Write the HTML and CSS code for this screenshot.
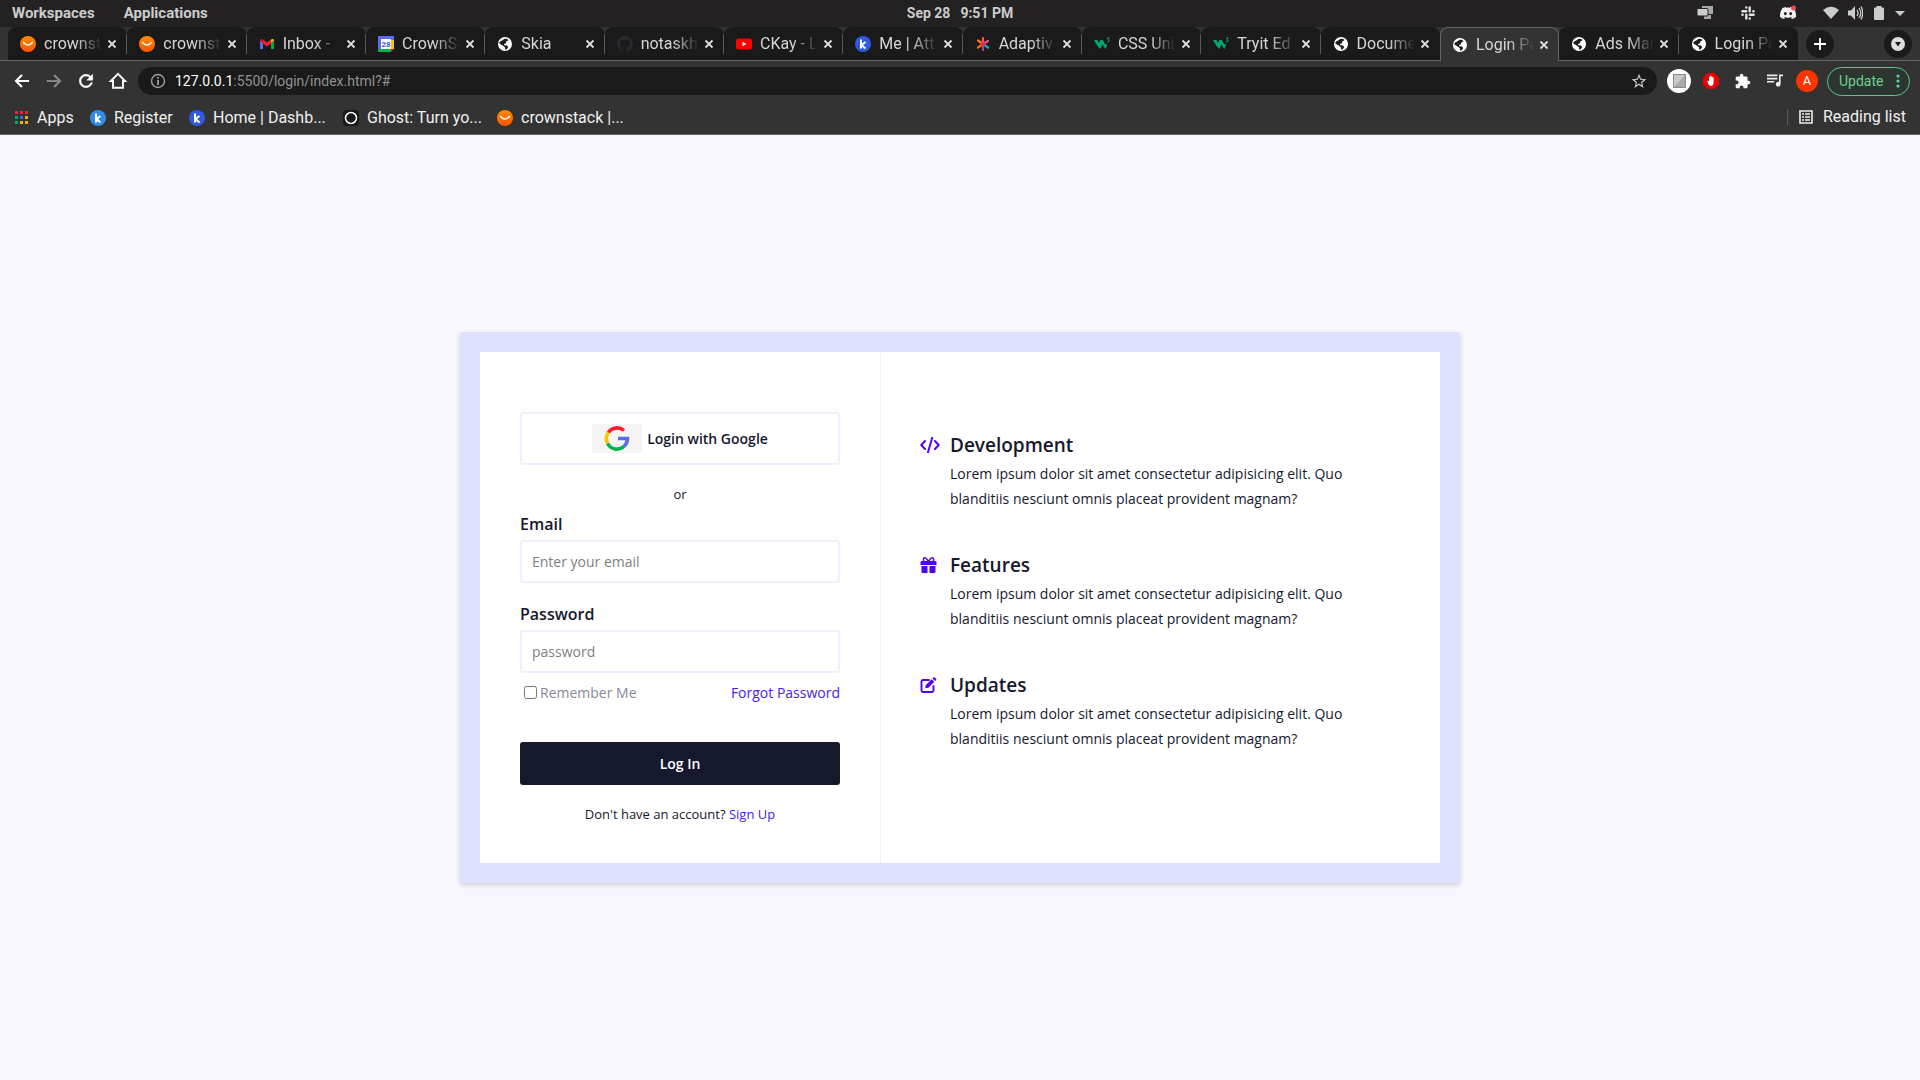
FILE: index.html
```html
<!DOCTYPE html>
<html lang="en">
<head>
<meta charset="utf-8">
<title>Login Page</title>
<link rel="stylesheet" href="styles.css">
</head>
<body>
<svg class="sprite" aria-hidden="true">
  <defs>
    <linearGradient id="orange" x1="0" y1="0" x2="0" y2="1"><stop offset="0" stop-color="#ff8a00"/><stop offset="1" stop-color="#ff5500"/></linearGradient>
  </defs>
  <symbol id="crown" viewBox="0 0 16 16"><circle cx="8" cy="8" r="8" fill="url(#orange)"/><path d="M3.500 6.500Q8 11.500 12.500 6.500" fill="none" stroke="#fff" stroke-width="1.500" stroke-linecap="round"/></symbol>
  <symbol id="gmail" viewBox="0 0 16 16"><path d="M1 4.500V13h3V7z" fill="#5a6cf5"/><path d="M15 4.500V13h-3V7z" fill="#00ac47"/><path d="M1 4.500L4 7V3.500C2.500 2.500 1 3 1 4.500z" fill="#c5121b"/><path d="M4 3.500l4 3 4-3V7.500l-4 3-4-3z" fill="#ff1a2d"/><path d="M15 4.500L12 7V3.500C13.500 2.500 15 3 15 4.500z" fill="#ffba00"/></symbol>
  <symbol id="calendar" viewBox="0 0 16 16"><path fill="#5a6cf5" d="M0 0h16v4H4v12H0z"/><path fill="#ffc400" d="M12 4h4v9h-4z"/><path fill="#00b44b" d="M0 13h13v3H0z"/><path fill="#e8202f" d="M13 13h3l-3 3z"/><path fill="#fff" d="M3 3h10v10H3z"/><text x="8" y="11" font-size="8" font-weight="700" text-anchor="middle" fill="#3a5be0">28</text></symbol>
  <symbol id="globe" viewBox="0 0 16 16"><circle cx="8" cy="8" r="7" fill="#fff"/><path d="M7 3.200c1.500-.8 3.500-.2 4.500 1l-2.300 1.300-.2 1.800-2 .7.300 1.300 2.700.2 1.200 1.400-1.500 2.300-1.700.6.200-2-1.400-1.500-3.600-2.200-1-.9c.3-1.500 1.300-2.300 2.600-2.500z" fill="#1c1c1c"/></symbol>
  <symbol id="github" viewBox="0 0 16 16"><path fill="#252a33" d="M8 0C3.580 0 0 3.580 0 8c0 3.540 2.290 6.530 5.470 7.590.4.070.55-.17.55-.38 0-.19-.01-.82-.01-1.490-2.010.37-2.530-.49-2.690-.94-.09-.23-.48-.94-.82-1.130-.28-.15-.68-.52-.01-.53.63-.01 1.080.58 1.230.82.72 1.210 1.870.87 2.330.66.070-.52.28-.87.51-1.070-1.780-.2-3.640-.89-3.640-3.950 0-.87.31-1.590.82-2.150-.08-.2-.36-1.020.08-2.120 0 0 .67-.21 2.200.82.64-.18 1.320-.27 2-.27.68 0 1.360.09 2 .27 1.530-1.040 2.200-.82 2.200-.82.44 1.100.16 1.920.08 2.120.51.56.82 1.270.82 2.150 0 3.070-1.870 3.750-3.650 3.950.29.25.54.73.54 1.480 0 1.070-.01 1.930-.01 2.200 0 .21.15.46.55.38A8.012 8.012 0 0 0 16 8c0-4.420-3.580-8-8-8z"/></symbol>
  <symbol id="youtube" viewBox="0 0 16 16"><rect y="2.500" width="16" height="11" rx="2.500" fill="#f00"/><path d="M6.500 5.700v4.600l4-2.300z" fill="#fff"/></symbol>
  <symbol id="kblue" viewBox="0 0 16 16"><circle cx="8" cy="8" r="8" fill="#3059e0"/><path d="M6 3.500v9M10.500 6L6.500 9l4 3.500" fill="none" stroke="#fff" stroke-width="2"/></symbol>
  <symbol id="klight" viewBox="0 0 16 16"><circle cx="8" cy="8" r="8" fill="#318ce8"/><path d="M6 3.500v9M10.500 6L6.500 9l4 3.500" fill="none" stroke="#fff" stroke-width="2"/></symbol>
  <symbol id="asterisk" viewBox="0 0 16 16"><g fill="none" stroke-width="2.200" stroke-linecap="round"><path d="M8 8V2" stroke="#ff5a3c"/><path d="M8 8l5-3" stroke="#f0508c"/><path d="M8 8l5 3.500" stroke="#18a7b5"/><path d="M8 8v6" stroke="#b04090"/><path d="M8 8l-5 3.500" stroke="#ff6a00"/><path d="M8 8L3 4.500" stroke="#ff7a1a"/></g><circle cx="8" cy="8" r="2" fill="#e8245c"/></symbol>
  <symbol id="w3" viewBox="0 0 16 16"><path d="M0 4h3.500l1.300 3L6.500 4h2.300l2.400 4.500 1.300-.5.500 1-1.500 4L8.300 8.500 6.500 13 3.500 10z" fill="#04aa6d"/><path d="M13 2h2.300L14 3.800c2 0 1.500 2.700-1 2" fill="none" stroke="#04aa6d"/></symbol>
  <symbol id="ghost" viewBox="0 0 16 16"><rect width="16" height="16" rx="4" fill="#15171a"/><circle cx="8" cy="8" r="5.500" fill="none" stroke="#fff" stroke-width="1.500"/></symbol>
  <symbol id="close" viewBox="0 0 16 16"><path d="M4.500 4.500l7 7M11.500 4.500l-7 7" stroke="#dedede" stroke-width="1.800"/></symbol>
</svg>

<header class="browser">
  <div class="system">
    <nav class="system-left"><a href="#">Workspaces</a><a href="#">Applications</a></nav>
    <div class="clock"><span>Sep 28</span><span>9:51 PM</span></div>
    <div class="tray">
      <svg class="i16" viewBox="0 0 16 16"><path d="M5 1h11v8H5zM7 10h7v4H7z" fill="#a8a8a8"/><rect y="3.500" width="11" height="7.500" rx="1" fill="#ccc" stroke="#242122"/></svg>
      <svg class="i16 tray-slack" viewBox="0 0 16 16"><path d="M2.400 6.300h3.800M9.700 2.400v3.800M9.800 9.700h3.800M6.300 9.800v3.800M6.300 2.400v.2M13.600 6.300h-.2M9.700 13.600v-.2M2.400 9.700h.2" fill="none" stroke="#e4e4e4" stroke-width="2.400" stroke-linecap="round"/></svg>
      <svg class="i16 tray-discord" viewBox="0 0 16 16"><path fill="#f2f2f2" d="M13.545 2.907a13.227 13.227 0 0 0-3.257-1.011c-.2.200-.35.500-.458.858a12.190 12.190 0 0 0-3.658 0c-.12-.3-.25-.6-.464-.858-1.125.194-2.220.534-3.257 1.011C.356 6.024-.213 9.047.066 12.032a13.276 13.276 0 0 0 4.016 2.057c.36-.42.650-.9.874-1.348a8.875 8.875 0 0 1-1.276-.665l.314-.280c2.619 1.196 5.454 1.196 8.092 0l.3.270a8.254 8.254 0 0 1-1.282.675c.24.465.515.909.873 1.348a13.235 13.235 0 0 0 4.022-2.057c.334-3.451-.559-6.449-2.454-9.125zM5.347 10.214c-.789 0-1.438-.724-1.438-1.612 0-.889.637-1.613 1.438-1.613s1.450.73 1.438 1.613c0 .888-.637 1.612-1.438 1.612zm5.316 0c-.788 0-1.438-.724-1.438-1.612 0-.889.637-1.613 1.438-1.613s1.451.73 1.438 1.613c0 .888-.631 1.612-1.438 1.612z"/><circle cx="13.500" cy="3" r="2.500" fill="#f04747"/></svg>
      <svg class="i16 tray-wifi" viewBox="0 0 16 16"><path d="M0 5Q8-1.500 16 5L8 14z" fill="#ccc"/></svg>
      <svg class="i16" viewBox="0 0 16 16"><path d="M1 5.500h3L8 1v14l-4-4.500H1z" fill="#ccc"/><path d="M10 5q2 3 0 6M12 3q3.500 5 0 10M14 1.500q3.500 6.500 0 13" fill="none" stroke="#ccc" stroke-width="1.300"/></svg>
      <svg class="i16" viewBox="0 0 16 16"><path d="M5.500 1h5v1.500H12q1 0 1 1V14q0 1-1 1H4q-1 0-1-1V3.500q0-1 1-1h1.500z" fill="#ccc"/></svg>
      <svg class="i16 tray-caret" viewBox="0 0 16 16"><path d="M3 6h10l-5 5z" fill="#ccc"/></svg>
    </div>
  </div>

  <div class="strip">
    <div class="tabs">
      <div class="tab"><svg class="i16"><use href="#crown"/></svg><span>crownst</span><button aria-label="Close"><svg class="i16"><use href="#close"/></svg></button></div>
      <div class="tab"><svg class="i16"><use href="#crown"/></svg><span>crownst</span><button aria-label="Close"><svg class="i16"><use href="#close"/></svg></button></div>
      <div class="tab"><svg class="i16"><use href="#gmail"/></svg><span>Inbox -</span><button aria-label="Close"><svg class="i16"><use href="#close"/></svg></button></div>
      <div class="tab"><svg class="i16"><use href="#calendar"/></svg><span>CrownSt</span><button aria-label="Close"><svg class="i16"><use href="#close"/></svg></button></div>
      <div class="tab"><svg class="i16"><use href="#globe"/></svg><span>Skia</span><button aria-label="Close"><svg class="i16"><use href="#close"/></svg></button></div>
      <div class="tab"><svg class="i16"><use href="#github"/></svg><span>notaskh</span><button aria-label="Close"><svg class="i16"><use href="#close"/></svg></button></div>
      <div class="tab"><svg class="i16"><use href="#youtube"/></svg><span>CKay - L</span><button aria-label="Close"><svg class="i16"><use href="#close"/></svg></button></div>
      <div class="tab"><svg class="i16"><use href="#kblue"/></svg><span>Me | Att</span><button aria-label="Close"><svg class="i16"><use href="#close"/></svg></button></div>
      <div class="tab"><svg class="i16"><use href="#asterisk"/></svg><span>Adaptiv</span><button aria-label="Close"><svg class="i16"><use href="#close"/></svg></button></div>
      <div class="tab"><svg class="i16"><use href="#w3"/></svg><span>CSS Uni</span><button aria-label="Close"><svg class="i16"><use href="#close"/></svg></button></div>
      <div class="tab"><svg class="i16"><use href="#w3"/></svg><span>Tryit Ed</span><button aria-label="Close"><svg class="i16"><use href="#close"/></svg></button></div>
      <div class="tab before-active"><svg class="i16"><use href="#globe"/></svg><span>Docume</span><button aria-label="Close"><svg class="i16"><use href="#close"/></svg></button></div>
      <div class="tab active"><svg class="i16"><use href="#globe"/></svg><span>Login Pa</span><button aria-label="Close"><svg class="i16"><use href="#close"/></svg></button></div>
      <div class="tab"><svg class="i16"><use href="#globe"/></svg><span>Ads Mar</span><button aria-label="Close"><svg class="i16"><use href="#close"/></svg></button></div>
      <div class="tab"><svg class="i16"><use href="#globe"/></svg><span>Login Pa</span><button aria-label="Close"><svg class="i16"><use href="#close"/></svg></button></div>
    </div>
    <button class="round" aria-label="New tab"><svg class="i16" viewBox="0 0 16 16"><path d="M8 2v12M2 8h12" stroke="#fff" stroke-width="1.800"/></svg></button>
    <button class="round search-tabs" aria-label="Search tabs"><svg class="i16" viewBox="0 0 16 16"><circle cx="8" cy="8" r="7" fill="#dedede"/><path d="M5 6h6l-3 4.500z" fill="#1a1a1a"/></svg></button>
  </div>

  <div class="toolbar">
    <div class="nav">
      <button aria-label="Back"><svg class="i20" viewBox="0 0 24 24"><path fill="#fff" d="M20.500 10.800H7.830l5.090-5.090L11 4l-8 8 8 8 1.800-1.700-5-5.100h12.700z"/></svg></button>
      <button aria-label="Forward"><svg class="i20" viewBox="0 0 24 24"><path fill="#868686" d="M3.500 10.800h12.670l-5.090-5.090L13 4l8 8-8 8-1.800-1.700 5-5.100H3.500z"/></svg></button>
      <button aria-label="Reload"><svg class="i20" viewBox="0 0 24 24"><path fill="#fff" stroke="#fff" stroke-width=".6" d="M17.650 6.350C16.200 4.900 14.210 4 12 4c-4.420 0-7.990 3.580-7.990 8s3.570 8 7.990 8c3.730 0 6.840-2.550 7.730-6h-2.080c-.82 2.330-3.040 4-5.650 4-3.310 0-6-2.690-6-6s2.690-6 6-6c1.660 0 3.140.69 4.220 1.780L13 11h7V4l-2.350 2.350z"/></svg></button>
      <button aria-label="Home"><svg class="i20" viewBox="0 0 24 24"><path d="M3.500 12L12 3.500l8.500 8.500H18v8H6v-8z" fill="none" stroke="#fff" stroke-width="2.300"/></svg></button>
    </div>
    <div class="omnibox">
      <svg class="i16" viewBox="0 0 16 16"><circle cx="8" cy="8" r="6.500" fill="none" stroke="#9a9fa4" stroke-width="1.400"/><path d="M8 4v1.800M8 7v5" stroke="#9a9fa4" stroke-width="1.800"/></svg>
      <div class="url"><b>127.0.0.1</b>:5500/login/index.html?#</div>
      <svg class="i16" viewBox="0 0 24 24"><path fill="#ccc" d="M23 9.240l-8-.62L12 1 9 8.630 1 9.240l6.200 5.230L5.300 22.500 12 18l6.700 4.500-1.900-8.030zM12 15.800l-4 2.500 1-4.900-3.500-2.900 4.700-.4L12 5.700l1.800 4.400 4.700.4-3.500 2.900 1 4.900z"/></svg>
    </div>
    <div class="extensions">
      <svg class="i24" viewBox="0 0 24 24"><circle cx="12" cy="12" r="12" fill="#fff"/><path d="M6 5h13v14H6z" fill="#a8a8a8"/><path d="M7 6h11L7 18z" fill="#c8c8c8"/><path d="M6.500 5.500h12v13h-12z" fill="none" stroke="#888"/></svg>
      <svg class="i16 ext" viewBox="0 0 16 16"><path d="M4.700 0h6.600L16 4.700v6.600L11.300 16H4.700L0 11.300V4.700z" fill="#f00000"/><path d="M5 7.500l1 1V4.200q.7-.8 1 0V3q.8-.8 1.200 0v.6q.8-.6 1.200 0v1q.8-.5 1.200 0V9q0 4-2.600 4Q6.500 13 5 10.500 3.800 7.800 5 7.500z" fill="#fff"/></svg>
      <svg class="i16 ext" viewBox="1 0 23 23"><path fill="#fff" d="M20.500 11H19V7c0-1.100-.9-2-2-2h-4V3.500C13 2.120 11.880 1 10.500 1S8 2.120 8 3.500V5H4c-1.100 0-1.990.9-1.990 2v3.800H3.500c1.490 0 2.700 1.210 2.700 2.700s-1.210 2.700-2.700 2.700H2V20c0 1.100.9 2 2 2h3.800v-1.500c0-1.490 1.210-2.700 2.700-2.700 1.490 0 2.700 1.210 2.700 2.700V22H17c1.100 0 2-.9 2-2v-4h1.500c1.380 0 2.500-1.120 2.500-2.500S21.880 11 20.500 11z"/></svg>
      <svg class="i16 ext" viewBox="2 3 20 20"><path fill="#eee" d="M15 5H2v2h13zm0 4H2v2h13zM2 15h9v-2H2zM17 5v9.180c-.31-.11-.65-.18-1-.18-1.660 0-3 1.340-3 3s1.340 3 3 3 3-1.340 3-3V7h3V5z"/></svg>
      <button class="avatar">A</button>
      <button class="update">Update<svg viewBox="0 0 4 14"><g fill="#6ad08f"><circle cx="2" cy="2" r="1.600"/><circle cx="2" cy="7" r="1.600"/><circle cx="2" cy="12" r="1.600"/></g></svg></button>
    </div>
  </div>

  <nav class="bookmarks">
    <div class="marks">
      <a href="#"><svg class="i14" viewBox="0 0 14 14"><path fill="#ff1d35" d="M0 0h3v3H0zM5 0h3v3H5zM10 0h3v3h-3z"/><path fill="#00ac57" d="M0 5h3v3H0z"/><path fill="#3b6cf0" d="M5 5h3v3H5z"/><path fill="#f9ab00" d="M10 5h3v3h-3zM5 10h3v3H5zM10 10h3v3h-3z"/><path fill="#00ac57" d="M0 10h3v3H0z"/></svg>Apps</a>
      <a href="#"><svg class="i16"><use href="#klight"/></svg>Register</a>
      <a href="#"><svg class="i16"><use href="#kblue"/></svg>Home | Dashb...</a>
      <a href="#"><svg class="i16"><use href="#ghost"/></svg>Ghost: Turn yo...</a>
      <a href="#"><svg class="i16"><use href="#crown"/></svg>crownstack |...</a>
    </div>
    <a class="reading" href="#"><svg class="i14" viewBox="0 0 14 14"><path d="M1 1h12v12H1z" fill="none" stroke="#eee" stroke-width="1.600"/><path d="M3 4h2M6 4h5M3 7h2M6 7h5M3 10h2M6 10h5" stroke="#eee" stroke-width="1.600"/></svg>Reading list</a>
  </nav>
</header>

<main>
  <div class="card">
    <form class="login">
      <button type="button" class="google">
        <svg viewBox="0 0 50 29"><path fill="#f5f5f5" d="M0 0h50v29H0z"/><g fill="none" stroke-width="3.600"><path d="M16.300 8.600A10.500 10.500 0 0 1 32 6.500" stroke="#ff1a2d"/><path d="M15.600 19.500A10.500 10.500 0 0 1 16.300 8.600" stroke="#ffc400"/><path d="M32 22.300A10.500 10.500 0 0 1 15.600 19.500" stroke="#00b44b"/><path d="M26 14.500h9.500A10.500 10.500 0 0 1 32 22.300" stroke="#5a6cf5"/></g></svg>
        Login with Google
      </button>
      <p class="or">or</p>
      <label for="email">Email</label>
      <input class="field" id="email" type="email" placeholder="Enter your email">
      <label for="password">Password</label>
      <input class="field" id="password" type="password" placeholder="password">
      <div class="options">
        <label class="remember"><input type="checkbox">Remember Me</label>
        <a href="#">Forgot Password</a>
      </div>
      <button type="button" class="submit">Log In</button>
      <p class="signup">Don't have an account? <a href="#">Sign Up</a></p>
    </form>
    <section class="features">
      <article>
        <svg class="feature-code" viewBox="0 0 20 16"><path d="M5 4L1.300 8 5 12M15 4l3.700 4L15 12M12.200.8L8 15.200" fill="none" stroke="#5206f0" stroke-width="2" stroke-linecap="round" stroke-linejoin="round"/></svg>
        <div><h2>Development</h2><p>Lorem ipsum dolor sit amet consectetur adipisicing elit. Quo blanditiis nesciunt omnis placeat provident magnam?</p></div>
      </article>
      <article>
        <svg class="feature-icon" viewBox="0 0 16 16"><path d="M1 4h14q1 0 1 1v3H0V5q0-1 1-1zM1 9h6v7H2q-1 0-1-1zM9 9h6v6q0 1-1 1H9z" fill="#5206f0"/><path d="M8 4.500Q5.500.8 4.300.8C2.300.8 2.500 4 4 4.500M8 4.500Q10.500.8 11.700.8C13.700.8 13.500 4 12 4.500" fill="none" stroke="#5206f0" stroke-width="1.500"/></svg>
        <div><h2>Features</h2><p>Lorem ipsum dolor sit amet consectetur adipisicing elit. Quo blanditiis nesciunt omnis placeat provident magnam?</p></div>
      </article>
      <article>
        <svg class="feature-icon" viewBox="0 0 16 16"><path d="M8.500 3H2.500Q1 3 1 4.500v9Q1 15 2.500 15h9q1.500 0 1.500-1.500V9" fill="none" stroke="#5206f0" stroke-width="1.900" stroke-linecap="round"/><path d="M11.200 2.200l2.600 2.600L8 10.700l-3.300.6.600-3.300zM12 1.400l.8-.8q.8-.8 1.600 0l1 1q.8.800 0 1.600l-.8.800z" fill="#5206f0"/></svg>
        <div><h2>Updates</h2><p>Lorem ipsum dolor sit amet consectetur adipisicing elit. Quo blanditiis nesciunt omnis placeat provident magnam?</p></div>
      </article>
    </section>
  </div>
</main>
</body>
</html>
```
FILE: styles.css
```css
* { box-sizing: border-box; margin: 0; padding: 0; }

body {
  min-height: 100vh;
  display: flex;
  flex-direction: column;
  background: #f7f7fd;
  color: #16182d;
  font-family: "Open Sans", sans-serif;
  font-size: 14px;
  line-height: 25px;
}

button { border: 0; background: none; font: inherit; color: inherit; }
a { color: inherit; text-decoration: none; }
svg { display: block; flex: none; }

.sprite { position: absolute; width: 0; height: 0; }
.i14 { width: 14px; height: 14px; }
.i16 { width: 16px; height: 16px; }
.i20 { width: 20px; height: 20px; }
.i24 { width: 24px; height: 24px; }

/* Desktop bar */
.browser { font-family: Roboto, sans-serif; font-size: 16px; line-height: 20px; }
.system {
  display: grid;
  grid-template-columns: 1fr auto 1fr;
  align-items: center;
  height: 27px;
  padding: 0 12px 2px;
  background: #242122;
  color: #ccc;
  font-size: 15px;
  font-weight: 700;
}
.system-left { display: flex; gap: 29px; }
.clock { display: flex; gap: 10px; font-size: 14px; }
.tray { display: flex; justify-content: flex-end; gap: 8px; }
.tray-slack { margin-left: 19px; }
.tray-discord { margin: 0 19px 0 16px; }
.tray-caret { margin-left: -3px; }

/* Tab strip */
.strip {
  display: flex;
  align-items: center;
  height: 34px;
  padding: 0 8px;
  background: #333;
  border-bottom: 1px solid #666;
}
.tabs { display: flex; flex: 1; min-width: 0; }
.tab {
  display: flex;
  flex: 1;
  align-items: center;
  min-width: 0;
  height: 33px;
  padding: 0 7px 0 12px;
  border-radius: 8px 8px 0 0;
  background: linear-gradient(#5a5a5a, #5a5a5a) right center / 1px 20px no-repeat #1a1a1a;
  color: #d6d6d6;
}
.tab:last-child, .before-active { background: #1a1a1a; }
.tab.active {
  height: 34px;
  margin-bottom: -1px;
  padding: 0 6px 0 11px;
  border: 1px solid #666;
  border-bottom: 0;
  background: #333;
}
.tab span {
  flex: 1;
  min-width: 0;
  margin: 0 2px 0 8px;
  overflow: hidden;
  white-space: nowrap;
  -webkit-mask-image: linear-gradient(to right, #000 55%, transparent);
  mask-image: linear-gradient(to right, #000 55%, transparent);
}
.round {
  display: grid;
  flex: none;
  place-items: center;
  width: 28px;
  height: 28px;
  margin-left: 8px;
  border-radius: 50%;
  background: #1a1a1a;
}
.search-tabs { margin-left: 50px; }

/* Toolbar */
.toolbar {
  display: flex;
  align-items: center;
  gap: 10px;
  height: 40px;
  padding: 0 10px 0 12px;
  background: #333;
}
.nav { display: flex; gap: 12px; }
.omnibox {
  display: flex;
  flex: 1;
  align-items: center;
  gap: 9px;
  height: 28px;
  padding: 0 10px 0 12px;
  border-radius: 14px;
  background: #1a1a1a;
}
.url { flex: 1; color: #929292; font-size: 14px; }
.url b { color: #fff; font-weight: 400; }
.extensions { display: flex; align-items: center; }
.ext { margin: 0 4px 0 12px; }
.avatar {
  width: 22px;
  height: 22px;
  margin: 0 9px;
  border-radius: 50%;
  background: #ff3300;
  color: #fff;
  font-size: 13px;
}
.update {
  display: flex;
  align-items: center;
  justify-content: space-between;
  width: 83px;
  height: 29px;
  padding: 0 9px 0 11px;
  border: 1px solid #5bc987;
  border-radius: 15px;
  background: #2d3531;
  color: #6ad08f;
  font-size: 14px;
}
.update svg { width: 4px; height: 14px; }

/* Bookmarks */
.bookmarks {
  display: flex;
  justify-content: space-between;
  height: 34px;
  padding: 7px 14px 8px 15px;
  border-bottom: 1px solid #666;
  background: #333;
  color: #f0f0f0;
}
.bookmarks a { display: flex; align-items: center; gap: 8px; white-space: nowrap; }
.marks { display: grid; grid-template-columns: 75px 99px 154px 154px auto; }
.bookmarks .reading { gap: 10px; padding-left: 12px; background: linear-gradient(#5a5a5a, #5a5a5a) left center / 1px 16px no-repeat; }

/* Login card */
main { display: flex; flex: 1; align-items: center; justify-content: center; }
.card {
  display: flex;
  width: 100%;
  max-width: 1000px;
  border: 20px solid #dde1ff;
  border-radius: 3px;
  background: #fff;
  box-shadow: 0 2px 5px rgba(0, 0, 0, .16);
}
.login {
  display: flex;
  flex-direction: column;
  width: 401px;
  padding: 60px 40px 37px;
  border-right: 1px solid #eef0ff;
}
.google {
  display: flex;
  align-items: center;
  justify-content: center;
  gap: 5px;
  height: 53px;
  margin-bottom: 17px;
  border: 2px solid #eef0ff;
  border-radius: 3px;
  font-weight: 600;
}
.google svg { width: 50px; height: 29px; }
.or, .signup { font-size: 13px; line-height: 24px; text-align: center; }
.or { margin-bottom: 4px; }
.login > label { margin-bottom: 2px; font-size: 16px; font-weight: 600; line-height: 28px; }
.field {
  height: 43px;
  margin-bottom: 17px;
  padding: 0 10px;
  border: 2px solid #eef0ff;
  border-radius: 3px;
  font: inherit;
}
.field::placeholder { color: #808080; }
#password { margin-bottom: 7px; }
.options { display: flex; justify-content: space-between; margin-bottom: 37px; }
.remember { display: flex; align-items: center; gap: 3px; padding-left: 4px; color: #87889a; }
.remember input { width: 13px; height: 13px; }
.login a { color: #4a1bef; }
.submit {
  height: 43px;
  margin-bottom: 17px;
  border-radius: 3px;
  background: #16182d;
  color: #fff;
  font-weight: 600;
}

/* Feature list */
.features {
  display: flex;
  flex: 1;
  flex-direction: column;
  gap: 37px;
  padding: 76px 60px 0 39px;
}
.features article { display: flex; }
.features article > div { flex: 1; }
.features h2 { font-size: 19px; font-weight: 600; line-height: 34px; }
.features p { margin-top: -1px; }
.feature-code { width: 20px; height: 16px; margin: 9px 10px 0 0; }
.feature-icon { width: 17px; height: 16px; margin: 9px 13px 0 0; }
```
